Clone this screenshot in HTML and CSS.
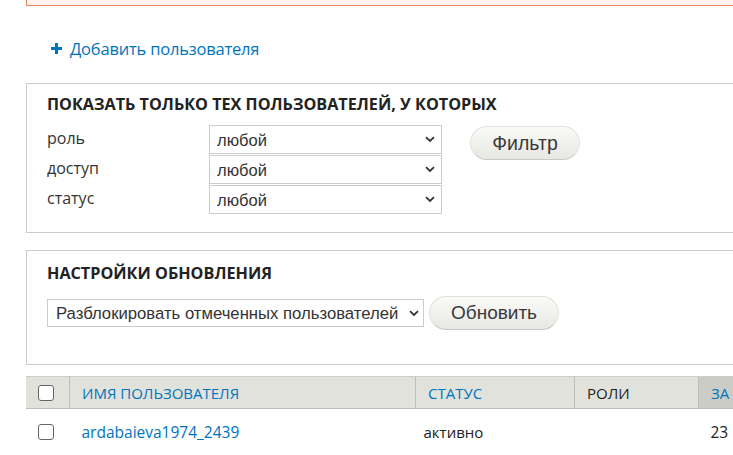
FILE: index.html
```html
<!DOCTYPE html>
<html>
<head>
    <meta charset="UTF-8">
    <title>Пользователи</title>
    <link rel="stylesheet" href="styles.css">
</head>
<body>
    <div class="page">
        <div class="messages"></div>

        <ul class="action-links">
            <li>
                <a href="#" class="add-link">
                    <svg class="plus" width="11" height="11" viewBox="0 0 11 11">
                        <rect x="4" y="0" width="3" height="11" fill="#0074bd"/>
                        <rect x="0" y="4" width="11" height="3" fill="#0074bd"/>
                    </svg>
                    Добавить пользователя
                </a>
            </li>
        </ul>

        <div class="panel panel-filter">
            <h2 class="panel-title">Показать только тех пользователей, у которых</h2>
            <div class="filter-body">
                <div class="filter-fields">
                    <label class="filter-label">роль</label>
                    <select class="form-select"><option>любой</option></select>
                    <label class="filter-label">доступ</label>
                    <select class="form-select"><option>любой</option></select>
                    <label class="filter-label">статус</label>
                    <select class="form-select"><option>любой</option></select>
                </div>
                <button type="button" class="button button-filter">Фильтр</button>
            </div>
        </div>

        <div class="panel panel-update">
            <h2 class="panel-title">Настройки обновления</h2>
            <div class="update-body">
                <select class="form-select select-op"><option>Разблокировать отмеченных пользователей</option></select>
                <button type="button" class="button button-update">Обновить</button>
            </div>
        </div>

        <table class="users">
            <thead>
                <tr>
                    <th class="col-check"><span class="checkbox"></span></th>
                    <th class="col-name"><a href="#">Имя пользователя</a></th>
                    <th class="col-status"><a href="#">Статус</a></th>
                    <th class="col-roles">Роли</th>
                    <th class="col-date active"><a href="#">За</a></th>
                </tr>
            </thead>
            <tbody>
                <tr>
                    <td class="col-check"><span class="checkbox"></span></td>
                    <td><a href="#">ardabaieva1974_2439</a></td>
                    <td class="cell-status">активно</td>
                    <td></td>
                    <td class="cell-date">23</td>
                </tr>
            </tbody>
        </table>
    </div>
</body>
</html>
```

FILE: styles.css
```css
html {
    overflow: hidden;
}
body {
    margin: 0;
    font-family: "Open Sans", sans-serif;
    color: #333;
    background-color: #fff;
}
.page {
    width: 760px;
    padding-left: 26px;
}
.messages {
    height: 5px;
    border: 1px solid #e0895a;
    border-top: none;
    background-color: #fff4f0;
}
.action-links {
    list-style: none;
    margin: 31px 0 0;
    padding: 0 0 0 25px;
}
.add-link {
    display: inline-flex;
    align-items: center;
    gap: 8px;
    color: #0074bd;
    text-decoration: none;
    font-size: 16.5px;
    line-height: 20px;
    letter-spacing: -0.2px;
}
.plus {
    display: block;
}
.panel {
    border: 1px solid #ccc;
    padding: 0 20px;
}
.panel-title {
    margin: 0;
    font-size: 16.2px;
    font-weight: bold;
    text-transform: uppercase;
    color: #222;
    line-height: 20px;
}
.panel-filter {
    margin-top: 24px;
    padding-top: 10px;
    padding-bottom: 17px;
}
.filter-body {
    display: flex;
    align-items: flex-start;
    margin-top: 11px;
}
.filter-fields {
    display: grid;
    grid-template-columns: 162px 233px;
    grid-auto-rows: 30px;
}
.filter-label {
    font-size: 16px;
    line-height: 20px;
    padding-top: 3px;
}
.form-select {
    appearance: none;
    -webkit-appearance: none;
    font-family: "Liberation Sans", Arial, sans-serif;
    font-size: 16.5px;
    color: #333;
    height: 29px;
    padding: 0 30px 0 7px;
    border: 1px solid #ccc;
    border-radius: 0;
    background-color: #fff;
    background-image: url("data:image/svg+xml;utf8,<svg xmlns='http://www.w3.org/2000/svg' width='10' height='7' viewBox='0 0 10 7'><path d='M1 1.2 L5 5 L9 1.2' fill='none' stroke='%23333' stroke-width='1.8'/></svg>");
    background-repeat: no-repeat;
    background-position: right 6px center;
}
.button {
    font-family: "Liberation Sans", Arial, sans-serif;
    color: #3a3a3a;
    border: 1px solid #e0e0dc;
    border-bottom-color: #c8c8c4;
    border-radius: 20px;
    background: linear-gradient(#fafaf8, #e7e7e3);
    cursor: pointer;
}
.button-filter {
    margin-left: 28px;
    margin-top: 1px;
    width: 110px;
    height: 34px;
    font-size: 19.5px;
}
.panel-update {
    margin-top: 17px;
    padding-top: 12px;
    padding-bottom: 34px;
}
.update-body {
    display: flex;
    align-items: center;
    gap: 5px;
    margin-top: 13px;
}
.select-op {
    width: 377px;
    height: 28px;
    padding-left: 8px;
    padding-right: 20px;
    font-size: 16.7px;
    background-position: right 4px center;
}
.button-update {
    width: 130px;
    height: 34px;
    font-size: 19px;
}
.users {
    margin-top: 11px;
    border-collapse: collapse;
    font-size: 15px;
    width: 740px;
}
.users th {
    background-color: #e1e2dc;
    border-top: 1px solid #ccc;
    border-bottom: 1px solid #bebfb9;
    border-left: 1px solid #bebfb9;
    text-align: left;
    font-weight: normal;
    text-transform: uppercase;
    height: 31px;
    padding: 0 12px;
    color: #222;
}
.users th:first-child {
    border-left: none;
}
.users th a,
.users td a {
    color: #0074bd;
    text-decoration: none;
}
.users th.active {
    background-color: #cbccc6;
}
.col-check {
    width: 19px;
}
.users th.col-check,
.users td.col-check {
    padding: 0 12px;
}
.col-name {
    width: 321px;
}
.col-status {
    width: 134px;
}
.col-roles {
    width: 99px;
}
.users td {
    height: 45px;
    padding: 0 12px;
    color: #222;
    font-size: 15.5px;
}
.cell-status {
    padding-left: 8px !important;
    font-size: 15px !important;
}
.checkbox {
    display: block;
    width: 14px;
    height: 14px;
    border: 1px solid #666;
    border-radius: 3px;
    background-color: #fff;
}
```
